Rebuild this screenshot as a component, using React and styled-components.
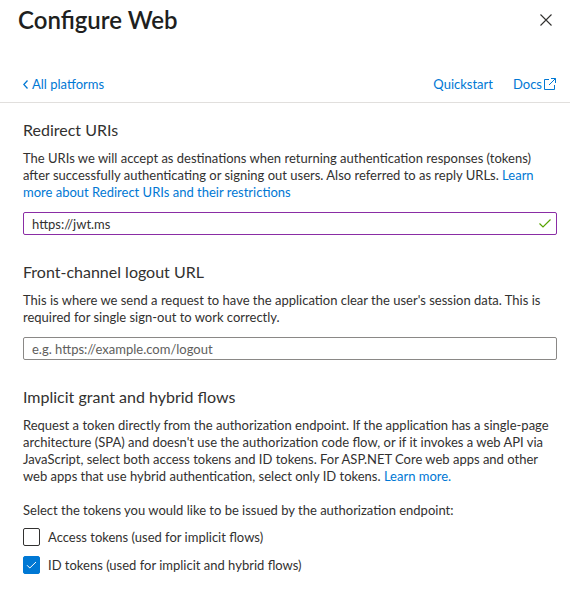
import React from 'react';
import styled, { createGlobalStyle } from 'styled-components';

const GlobalStyle = createGlobalStyle`
    body {
        margin: 0;
        background: #ffffff;
        font-family: Lato, "Segoe UI", sans-serif;
        color: #323130;
    }
`;

const Panel = styled.div`
    width: 570px;
    height: 613px;
    overflow: hidden;
    background: #ffffff;
`;

const Header = styled.header`
    display: flex;
    justify-content: space-between;
    align-items: center;
    height: 40px;
    padding: 0 16px 0 18px;
    h1 {
        margin: 0;
        font-size: 24px;
        line-height: 32px;
        font-weight: 600;
        color: #201f1e;
    }
`;

const CloseButton = styled.button`
    background: none;
    border: none;
    padding: 0;
    width: 16px;
    height: 16px;
    display: flex;
    align-items: center;
    justify-content: center;
    cursor: pointer;
`;

const NavBar = styled.nav`
    display: flex;
    justify-content: space-between;
    align-items: center;
    padding: 34px 13px 8px 23px;
    line-height: 20px;
    border-bottom: 1px solid #e1dfdd;
    font-size: 13px;
    .right {
        display: flex;
        gap: 20px;
    }
`;

const NavLink = styled.a`
    display: inline-flex;
    align-items: center;
    gap: ${p => p.$gap || 0}px;
    color: #0078d4;
    text-decoration: none;
    cursor: pointer;
`;

const Content = styled.main`
    padding: 0 13px 0 23px;
`;

const Section = styled.section`
    margin-top: ${p => p.$first ? 16 : 26}px;
    h2 {
        margin: 0;
        font-size: 16px;
        line-height: 22px;
        font-weight: 400;
        color: #323130;
    }
`;

const Text = styled.p`
    margin: ${p => p.$top || 9}px 0 0;
    font-size: 13px;
    line-height: 17px;
    color: #323130;
    a {
        color: #0078d4;
        text-decoration: none;
    }
`;

const InputWrap = styled.div`
    position: relative;
    margin-top: 11px;
    svg {
        position: absolute;
        right: 6px;
        top: 7px;
    }
`;

const TextInput = styled.input`
    box-sizing: border-box;
    width: 100%;
    height: 23px;
    padding: 0 8px;
    border: 1px solid ${p => p.$active ? '#8a2da5' : '#8a8886'};
    border-radius: 2px;
    font-family: inherit;
    font-size: 13px;
    color: #323130;
    outline: none;
    &::placeholder {
        color: #605e5c;
    }
`;

const CheckList = styled.div`
    display: flex;
    flex-direction: column;
    gap: 10px;
    margin-top: 9px;
`;

const CheckRow = styled.label`
    display: flex;
    align-items: center;
    gap: 8px;
    font-size: 13px;
    line-height: 18px;
    color: #323130;
`;

const Box = styled.span`
    box-sizing: border-box;
    width: 17px;
    height: 18px;
    border-radius: 2px;
    border: 1px solid ${p => p.$checked ? '#0078d4' : '#323130'};
    background: ${p => p.$checked ? '#0078d4' : '#ffffff'};
    display: flex;
    align-items: center;
    justify-content: center;
`;

const Checkbox = ({ checked, children }) => (
    <CheckRow>
        <Box $checked={checked}>
            {checked &&
                <svg width="11" height="8" viewBox="0 0 11 8">
                    <path d="M1 4.2 L3.8 7 L10 1" fill="none" stroke="#ffffff" strokeWidth="1" />
                </svg>
            }
        </Box>
        {children}
    </CheckRow>
);

const App = () => {
    return (
        <Panel>
            <GlobalStyle />
            <Header>
                <h1>Configure Web</h1>
                <CloseButton type="button" aria-label="Close">
                    <svg width="12" height="12" viewBox="0 0 12 12">
                        <path d="M0.5 0.5 L11.5 11.5 M11.5 0.5 L0.5 11.5" stroke="#323130" strokeWidth="1.1" />
                    </svg>
                </CloseButton>
            </Header>
            <NavBar>
                <NavLink $gap={4}>
                    <svg width="5" height="9" viewBox="0 0 5 9">
                        <path d="M4.5 0.5 L0.8 4.5 L4.5 8.5" fill="none" stroke="#0078d4" strokeWidth="1.3" />
                    </svg>
                    All platforms
                </NavLink>
                <div className="right">
                    <NavLink>Quickstart</NavLink>
                    <NavLink $gap={1}>
                        Docs
                        <svg width="14" height="14" viewBox="0 0 14 14">
                            <path d="M6 2.5 H1.5 V12.5 H11.5 V8" fill="none" stroke="#0078d4" strokeWidth="1" />
                            <path d="M8 1.5 H12.5 V6 M12.5 1.5 L6 8" fill="none" stroke="#0078d4" strokeWidth="1" />
                        </svg>
                    </NavLink>
                </div>
            </NavBar>
            <Content>
                <Section $first>
                    <h2>Redirect URIs</h2>
                    <Text>
                        The URIs we will accept as destinations when returning authentication responses (tokens)
                        after successfully authenticating or signing out users. Also referred to as reply URLs.{' '}
                        <a>Learn more about Redirect URIs and their restrictions</a>
                    </Text>
                    <InputWrap>
                        <TextInput $active defaultValue="https://jwt.ms" />
                        <svg width="12" height="9" viewBox="0 0 12 9">
                            <path d="M0.5 4.5 L4 8 L11.5 0.5" fill="none" stroke="#57a300" strokeWidth="1.2" />
                        </svg>
                    </InputWrap>
                </Section>
                <Section>
                    <h2>Front-channel logout URL</h2>
                    <Text>
                        This is where we send a request to have the application clear the user's session data. This is
                        required for single sign-out to work correctly.
                    </Text>
                    <InputWrap>
                        <TextInput placeholder="e.g. https://example.com/logout" />
                    </InputWrap>
                </Section>
                <Section>
                    <h2>Implicit grant and hybrid flows</h2>
                    <Text>
                        Request a token directly from the authorization endpoint. If the application has a single-page
                        architecture (SPA) and doesn't use the authorization code flow, or if it invokes a web API via
                        JavaScript, select both access tokens and ID tokens. For ASP.NET Core web apps and other
                        web apps that use hybrid authentication, select only ID tokens. <a>Learn more.</a>
                    </Text>
                    <Text $top={17}>Select the tokens you would like to be issued by the authorization endpoint:</Text>
                    <CheckList>
                        <Checkbox>Access tokens (used for implicit flows)</Checkbox>
                        <Checkbox checked>ID tokens (used for implicit and hybrid flows)</Checkbox>
                    </CheckList>
                </Section>
            </Content>
        </Panel>
    );
};

export default App;
